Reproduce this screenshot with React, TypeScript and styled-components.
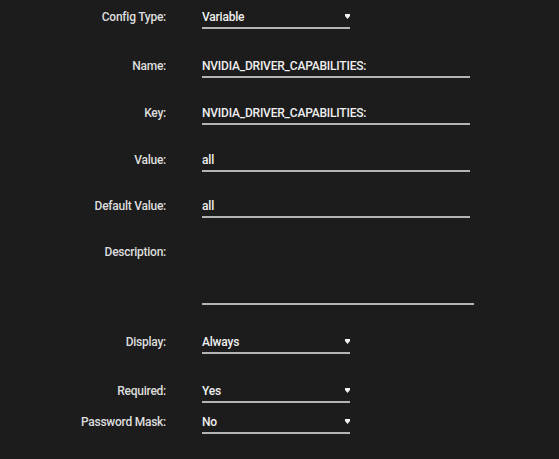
import React from "react";
import styled, { createGlobalStyle } from "styled-components";

const Global = createGlobalStyle`
  html, body { margin: 0; padding: 0; background: #1c1c1c; }
  body { font-family: Roboto, "Liberation Sans", sans-serif; }
`;

const Form = styled.div`
  display: flex;
  flex-direction: column;
  padding-top: 5px;
  width: 559px;
  min-height: 459px;
  box-sizing: border-box;
  background: #1c1c1c;
`;

const Row = styled.div<{ $top: number; $alignTop?: boolean }>`
  display: grid;
  grid-template-columns: 166px auto;
  column-gap: 36px;
  align-items: ${(p) => (p.$alignTop ? "start" : "baseline")};
  margin-top: ${(p) => p.$top}px;
`;

const Label = styled.label<{ $padTop?: number }>`
  text-align: right;
  color: #dedede;
  font-size: 12px;
  font-weight: 500;
  letter-spacing: -0.25px;
  white-space: nowrap;
  padding-top: ${(p) => p.$padTop ?? 0}px;
`;

const Field = styled.div<{ $width: number; $height?: number }>`
  position: relative;
  box-sizing: border-box;
  width: ${(p) => p.$width}px;
  height: ${(p) => p.$height ?? 24}px;
  padding-top: 1px;
  line-height: 22px;
  font-size: 12px;
  font-weight: 500;
  letter-spacing: -0.2px;
  color: #efefef;
  border-bottom: 2px solid #b4b4b4;
  white-space: nowrap;
`;

const Arrow = styled.svg`
  position: absolute;
  right: 0;
  top: 9px;
`;

type Item = {
  label: string;
  value: string;
  select?: boolean;
  top: number;
  area?: boolean;
};

const items: Item[] = [
  { label: "Config Type:", value: "Variable", select: true, top: 0 },
  { label: "Name:", value: "NVIDIA_DRIVER_CAPABILITIES:", top: 25 },
  { label: "Key:", value: "NVIDIA_DRIVER_CAPABILITIES:", top: 23 },
  { label: "Value:", value: "all", top: 23 },
  { label: "Default Value:", value: "all", top: 22 },
  { label: "Description:", value: "", top: 22, area: true },
  { label: "Display:", value: "Always", select: true, top: 25 },
  { label: "Required:", value: "Yes", select: true, top: 25 },
  { label: "Password Mask:", value: "No", select: true, top: 7 },
];

export default function App() {
  return (
    <>
      <Global />
      <Form>
        {items.map((it) => (
          <Row key={it.label} $top={it.top} $alignTop={it.area}>
            <Label $padTop={it.area ? 5 : 0}>{it.label}</Label>
            <Field
              $width={it.select ? 148 : it.area ? 272 : 268}
              $height={it.area ? 65 : 24}
            >
              {it.value}
              {it.select && (
                <Arrow width="5" height="5" viewBox="0 0 5 5">
                  <polygon points="0,0 5,0 5,2 2.5,5 0,2" fill="#f2f2f2" />
                </Arrow>
              )}
            </Field>
          </Row>
        ))}
      </Form>
    </>
  );
}
